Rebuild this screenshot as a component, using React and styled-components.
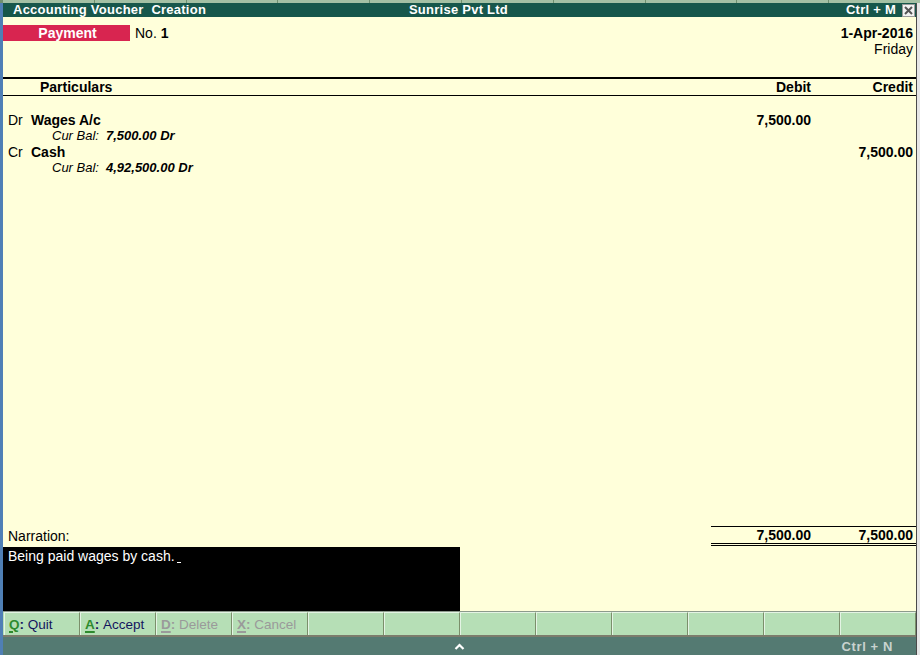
import styled, { createGlobalStyle } from "styled-components";

const GlobalStyle = createGlobalStyle`
  html, body {
    margin: 0;
    padding: 0;
    background: #e6e6e6;
  }
  body {
    font-family: "Liberation Sans", Arial, sans-serif;
  }
`;

const Screen = styled.div`
  width: 920px;
  height: 655px;
  display: flex;
  flex-direction: column;
  overflow: hidden;
  background: #e6e6e6;
`;

const TabStrip = styled.div`
  height: 3px;
  display: flex;
  background: #6f8f6f;
  padding-left: 3px;
  gap: 1px;
`;

const Tab = styled.div`
  flex: 1;
  background: #a4c0a4;
`;

const Window = styled.div`
  flex: 1;
  display: flex;
  flex-direction: column;
  width: 913px;
  border-left: 3px solid #4f7fb5;
  border-right: 1px solid #4a4a4a;
  background: #ffffda;
  min-height: 0;
`;

const TitleBar = styled.div`
  height: 14px;
  background: #17574b;
  color: #ffffff;
  font-size: 13px;
  font-weight: bold;
  letter-spacing: 0.25px;
  display: grid;
  grid-template-columns: 1fr auto 1fr;
  align-items: center;
  padding-left: 10px;
  white-space: pre;
  line-height: 14px;
`;

const TitleCenter = styled.span`
  padding-right: 12px;
`;

const TitleRight = styled.div`
  display: flex;
  justify-content: flex-end;
  align-items: center;
  gap: 6px;
`;

const CloseBox = styled.span`
  width: 11px;
  height: 11px;
  background: #f2f2f2;
  border: 1px solid #9a9a9a;
  margin-right: 1px;
  display: flex;
  align-items: center;
  justify-content: center;
`;

const VoucherHead = styled.div`
  height: 60px;
  display: flex;
  justify-content: space-between;
  padding: 8px 3px 0 0;
  box-sizing: border-box;
`;

const TypeRow = styled.div`
  display: flex;
  align-items: flex-start;
  gap: 5px;
`;

const TypeBadge = styled.div`
  width: 127px;
  height: 16px;
  background: #d82550;
  color: #fff;
  font-weight: bold;
  font-size: 14px;
  line-height: 16px;
  text-align: center;
  padding-left: 2px;
  box-sizing: border-box;
`;

const Plain = styled.span`
  font-size: ${({ $size }) => $size || "14px"};
  line-height: 16px;
  color: #000;
  font-weight: ${({ $bold }) => ($bold ? "bold" : "normal")};
  font-style: ${({ $italic }) => ($italic ? "italic" : "normal")};
`;

const DateBlock = styled.div`
  display: flex;
  flex-direction: column;
  align-items: flex-end;
`;

const TableHead = styled.div`
  display: grid;
  grid-template-columns: 1fr 102px 102px;
  border-top: 2px solid #000;
  border-bottom: 1px solid #000;
  height: 16px;
  padding-right: 3px;
  font-size: 14px;
  font-weight: bold;
  line-height: 16px;
`;

const HeadCell = styled.div`
  text-align: ${({ $right }) => ($right ? "right" : "left")};
  padding-left: ${({ $right }) => ($right ? "0" : "37px")};
`;

const Entries = styled.div`
  flex: 1;
  padding-top: 16px;
  display: flex;
  flex-direction: column;
`;

const EntryRow = styled.div`
  display: grid;
  grid-template-columns: 1fr 102px 102px;
  padding-right: 3px;
  height: 16px;
  font-size: 14px;
  line-height: 16px;
`;

const LedgerCell = styled.div`
  display: flex;
  padding-left: 5px;
`;

const DrCr = styled.span`
  width: 23px;
`;

const BalanceLine = styled.div`
  height: 16px;
  line-height: 16px;
  font-size: 13px;
  font-style: italic;
  padding-left: 49px;
  display: flex;
  gap: 7px;
`;

const Amount = styled.div`
  text-align: right;
  font-weight: bold;
`;

const FooterRow = styled.div`
  display: grid;
  grid-template-columns: 1fr 205px;
  align-items: end;
`;

const NarrationLabel = styled.div`
  font-size: 14px;
  line-height: 16px;
  padding-left: 5px;
  padding-bottom: 3px;
`;

const Totals = styled.div`
  display: grid;
  grid-template-columns: 100px 102px;
  padding-right: 3px;
  border-top: 1px solid #000;
  border-bottom: 3px double #000;
  height: 16px;
  font-size: 14px;
  line-height: 16px;
  font-weight: bold;
  margin-bottom: 1px;
`;

const NarrationArea = styled.div`
  display: flex;
  height: 64px;
`;

const NarrationBox = styled.div`
  width: 457px;
  background: #000;
  color: #fff;
  font-size: 14px;
  line-height: 16px;
  padding: 1px 5px;
  box-sizing: border-box;
`;

const Cursor = styled.span`
  display: inline-block;
  width: 4px;
  height: 1px;
  background: #fff;
  margin-left: 2px;
  vertical-align: -2px;
`;

const ButtonBar = styled.div`
  height: 26px;
  display: grid;
  grid-template-columns: repeat(12, 1fr);
  background: #b6dfb6;
  border-top: 1px solid #8c9a8c;
  border-bottom: 2px solid #7c7c6c;
  box-sizing: border-box;
  padding-left: 1px;
`;

const KeyButton = styled.div`
  border-left: 1px solid #e4f4e4;
  border-right: 1px solid #7b8f6b;
  border-top: 1px solid #e4f4e4;
  display: flex;
  align-items: center;
  padding-left: 4px;
  font-size: 13.5px;
  color: ${({ $disabled }) => ($disabled ? "#9a9a9a" : "#14145e")};
  white-space: pre;
`;

const HotKey = styled.span`
  text-decoration: underline;
  text-decoration-thickness: 2px;
  text-underline-offset: 2px;
  font-weight: bold;
  color: ${({ $disabled }) => ($disabled ? "#9a9a9a" : "#2e8b2e")};
`;

const Colon = styled.span`
  font-weight: bold;
`;

const StatusBar = styled.div`
  height: 18px;
  background: #547a72;
  display: grid;
  grid-template-columns: 1fr auto 1fr;
  align-items: center;
  color: #c9d3cf;
  font-size: 13px;
  font-weight: bold;
`;

const StatusRight = styled.div`
  text-align: right;
  padding-right: 23px;
  letter-spacing: 0.6px;
`;

const buttons = [
  { key: "Q", label: "Quit" },
  { key: "A", label: "Accept" },
  { key: "D", label: "Delete", disabled: true },
  { key: "X", label: "Cancel", disabled: true },
  {}, {}, {}, {}, {}, {}, {}, {},
];

const entries = [
  { side: "Dr", ledger: "Wages A/c", balance: "7,500.00 Dr", debit: "7,500.00", credit: "" },
  { side: "Cr", ledger: "Cash", balance: "4,92,500.00 Dr", debit: "", credit: "7,500.00" },
];

export default function App() {
  return (
    <>
      <GlobalStyle />
      <Screen>
        <TabStrip>
          {Array.from({ length: 10 }).map((_, i) => (
            <Tab key={i} />
          ))}
        </TabStrip>
        <Window>
          <TitleBar>
            <span>Accounting Voucher  Creation</span>
            <TitleCenter>Sunrise Pvt Ltd</TitleCenter>
            <TitleRight>
              <span>Ctrl + M</span>
              <CloseBox>
                <svg width="9" height="9" viewBox="0 0 9 9">
                  <path d="M1 1L8 8M8 1L1 8" stroke="#555" strokeWidth="2" />
                </svg>
              </CloseBox>
            </TitleRight>
          </TitleBar>

          <VoucherHead>
            <TypeRow>
              <TypeBadge>Payment</TypeBadge>
              <Plain>
                No. <Plain $bold>1</Plain>
              </Plain>
            </TypeRow>
            <DateBlock>
              <Plain $bold>1-Apr-2016</Plain>
              <Plain>Friday</Plain>
            </DateBlock>
          </VoucherHead>

          <TableHead>
            <HeadCell>Particulars</HeadCell>
            <HeadCell $right>Debit</HeadCell>
            <HeadCell $right>Credit</HeadCell>
          </TableHead>

          <Entries>
            {entries.map((e) => (
              <div key={e.ledger}>
                <EntryRow>
                  <LedgerCell>
                    <DrCr>{e.side}</DrCr>
                    <Plain $bold>{e.ledger}</Plain>
                  </LedgerCell>
                  <Amount>{e.debit}</Amount>
                  <Amount>{e.credit}</Amount>
                </EntryRow>
                <BalanceLine>
                  <span>Cur Bal:</span>
                  <Plain $bold $italic $size="13px">{e.balance}</Plain>
                </BalanceLine>
              </div>
            ))}
          </Entries>

          <FooterRow>
            <NarrationLabel>Narration:</NarrationLabel>
            <Totals>
              <Amount>7,500.00</Amount>
              <Amount>7,500.00</Amount>
            </Totals>
          </FooterRow>

          <NarrationArea>
            <NarrationBox>
              Being paid wages by cash.<Cursor />
            </NarrationBox>
          </NarrationArea>

          <ButtonBar>
            {buttons.map((b, i) => (
              <KeyButton key={i} $disabled={b.disabled}>
                {b.key && (
                  <>
                    <HotKey $disabled={b.disabled}>{b.key}</HotKey>
                    <Colon>: </Colon>
                    {b.label}
                  </>
                )}
              </KeyButton>
            ))}
          </ButtonBar>

          <StatusBar>
            <span />
            <svg width="11" height="7" viewBox="0 0 11 7">
              <path d="M1.5 6L5.5 2L9.5 6" stroke="#fff" strokeWidth="2.2" fill="none" />
            </svg>
            <StatusRight>Ctrl + N</StatusRight>
          </StatusBar>
        </Window>
      </Screen>
    </>
  );
}
